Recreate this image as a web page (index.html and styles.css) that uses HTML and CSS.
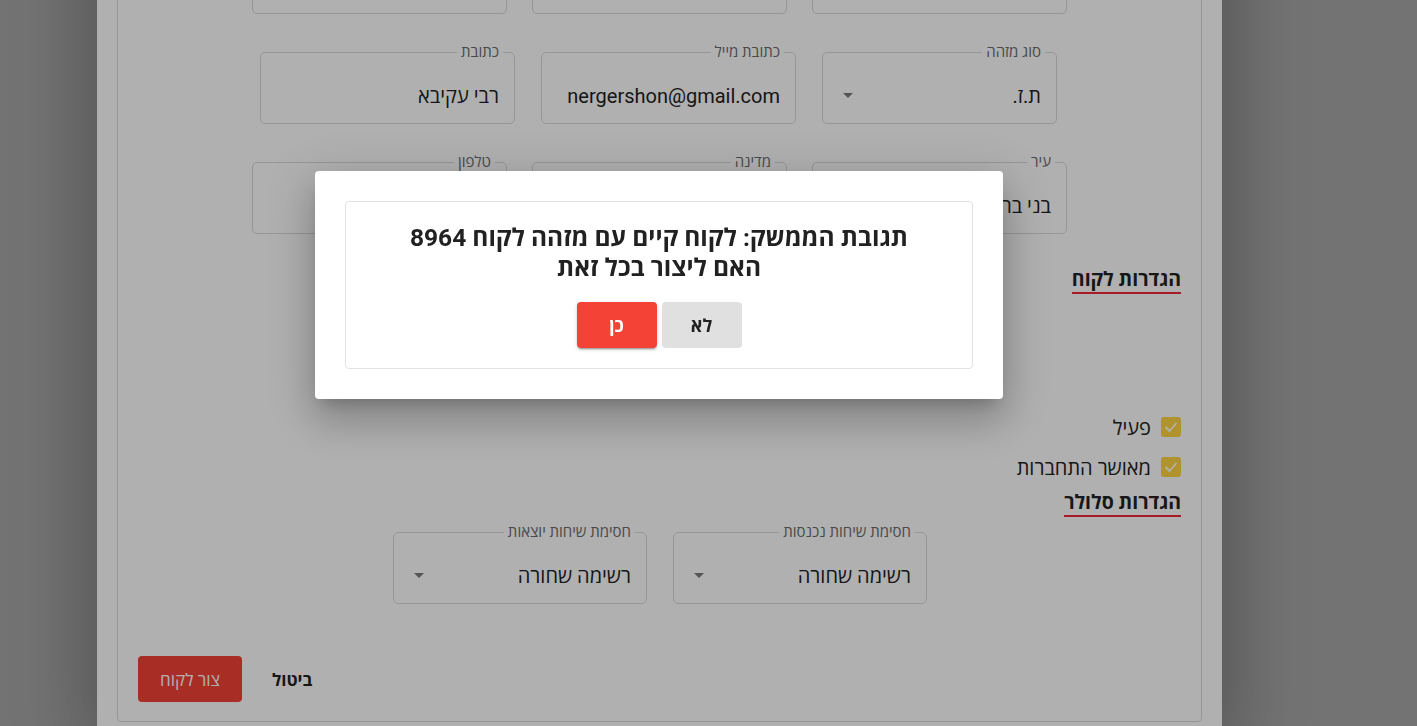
FILE: index.html
```html
<!DOCTYPE html>
<html lang="he">
<head>
<meta charset="utf-8">
<title>יצירת לקוח</title>
<link rel="stylesheet" href="styles.css">
</head>
<body>
<div class="panel">
  <div class="card">
    <div class="row row-wide">
      <fieldset class="field"><legend class="blank"></legend><div class="value">&nbsp;</div></fieldset>
      <fieldset class="field"><legend class="blank"></legend><div class="value">&nbsp;</div></fieldset>
      <fieldset class="field"><legend class="blank"></legend><div class="value">&nbsp;</div></fieldset>
    </div>
    <div class="row row-mid">
      <fieldset class="field narrow"><legend>סוג מזהה</legend><div class="value"><span>ת.ז.</span><i class="arrow"></i></div></fieldset>
      <fieldset class="field"><legend>כתובת מייל</legend><div class="value">nergershon@gmail.com</div></fieldset>
      <fieldset class="field"><legend>כתובת</legend><div class="value">רבי עקיבא</div></fieldset>
    </div>
    <div class="row row-wide row-last">
      <fieldset class="field"><legend>עיר</legend><div class="value">בני ברק</div></fieldset>
      <fieldset class="field"><legend>מדינה</legend><div class="value">ישראל</div></fieldset>
      <fieldset class="field"><legend>טלפון</legend><div class="value">0527654321</div></fieldset>
    </div>

    <h3 class="section-title first">הגדרות לקוח</h3>

    <div class="checks">
      <label class="check"><span class="box"><svg viewBox="0 0 20 20" width="20" height="20"><polyline points="5,10.5 8.5,14 15,6.5" fill="none" stroke="#fff" stroke-width="1.8" stroke-linecap="round" stroke-linejoin="round"/></svg></span>פעיל</label>
      <label class="check"><span class="box"><svg viewBox="0 0 20 20" width="20" height="20"><polyline points="5,10.5 8.5,14 15,6.5" fill="none" stroke="#fff" stroke-width="1.8" stroke-linecap="round" stroke-linejoin="round"/></svg></span>מאושר התחברות</label>
    </div>

    <h3 class="section-title">הגדרות סלולר</h3>

    <div class="row row-cell">
      <fieldset class="field"><legend>חסימת שיחות נכנסות</legend><div class="value"><span>רשימה שחורה</span><i class="arrow"></i></div></fieldset>
      <fieldset class="field"><legend>חסימת שיחות יוצאות</legend><div class="value"><span>רשימה שחורה</span><i class="arrow"></i></div></fieldset>
    </div>

    <div class="actions">
      <button class="btn-flat">ביטול</button>
      <button class="btn-primary">צור לקוח</button>
    </div>
  </div>
</div>

<div class="backdrop"></div>

<div class="dialog">
  <div class="dialog-box">
    <h2 class="dialog-title">תגובת הממשק: לקוח קיים עם מזהה לקוח 8964<br>האם ליצור בכל זאת</h2>
    <div class="dialog-actions">
      <button class="btn-no">לא</button>
      <button class="btn-yes">כן</button>
    </div>
  </div>
</div>
</body>
</html>
```

FILE: styles.css
```css
html, body {
  margin: 0;
  height: 726px;
  overflow: hidden;
}

body {
  background: #a7a7a7;
  font-family: Roboto, "Open Sans", "Noto Sans", sans-serif;
  color: #212121;
}

.panel {
  width: 1125px;
  box-sizing: border-box;
  margin: -106px 0 0 97px;
  padding: 20px;
  background: #fff;
  box-shadow: 0 0 70px 10px rgba(0, 0, 0, 0.28);
}

.card {
  direction: rtl;
  border: 1px solid #d9d9d9;
  border-radius: 4px;
  padding: 19px 0 19px;
}

.row {
  display: flex;
  gap: 25px;
  padding-right: 134px;
  margin-bottom: 30px;
}

.row-mid {
  gap: 26px;
  padding-right: 144px;
}

.row-last {
  margin-bottom: 34px;
}

.row-cell {
  gap: 26px;
  padding-right: 274px;
  margin: 7px 0 0;
}

.field {
  width: 255px;
  box-sizing: border-box;
  margin: 0;
  padding: 0 15px 15px;
  min-width: 0;
  border: 1px solid #d9d9d9;
  border-radius: 5px;
}

.row-cell .field {
  width: 254px;
}

.field.narrow {
  width: 235px;
}

.field legend {
  font-size: 15px;
  line-height: 16px;
  color: #6c6c6c;
  padding: 0 4px;
  margin-right: -4px;
}

.field legend.blank {
  height: 16px;
  padding: 0;
}

.value {
  display: flex;
  justify-content: space-between;
  align-items: flex-start;
  padding-top: 24px;
  font-size: 20px;
  line-height: 24px;
  color: #222;
  white-space: nowrap;
}

.arrow {
  display: block;
  width: 0;
  height: 0;
  margin: 9px 0 0 5px;
  border-left: 5px solid transparent;
  border-right: 5px solid transparent;
  border-top: 5px solid #7a7a7a;
}

.section-title {
  width: fit-content;
  margin: 0 20px 0 0;
  font-size: 19.5px;
  line-height: 24px;
  font-weight: 700;
  color: #222;
  border-bottom: 2px solid #f2283a;
}

.checks {
  margin: 113px 20px 4px 0;
}

.check {
  display: flex;
  align-items: center;
  gap: 10px;
  height: 40px;
  font-size: 20px;
  color: #222;
}

.box {
  width: 20px;
  height: 20px;
  border-radius: 3px;
  background: #ffd642;
  display: block;
}

.box svg {
  display: block;
}

.actions {
  display: flex;
  justify-content: flex-end;
  gap: 10px;
  padding-left: 20px;
  margin-top: 52px;
}

.actions button {
  height: 46px;
  border: 0;
  border-radius: 4px;
  font-family: inherit;
  font-size: 17px;
  cursor: pointer;
}

.btn-flat {
  background: transparent;
  padding: 0 20px;
  font-weight: 700;
  color: #222;
}

.btn-primary {
  width: 104px;
  background: #f44336;
  color: #fff;
  font-weight: 500;
}

.backdrop {
  position: fixed;
  inset: 0;
  background: rgba(0, 0, 0, 0.31);
}

.dialog {
  position: absolute;
  left: 315px;
  top: 171px;
  width: 688px;
  box-sizing: border-box;
  padding: 30px;
  background: #fff;
  border-radius: 4px;
  direction: rtl;
  box-shadow: 0 11px 15px -7px rgba(0, 0, 0, 0.2), 0 24px 38px 3px rgba(0, 0, 0, 0.14), 0 9px 46px 8px rgba(0, 0, 0, 0.12);
}

.dialog-box {
  border: 1px solid #e2e2e2;
  border-radius: 4px;
  padding: 21px 0 20px;
  text-align: center;
}

.dialog-title {
  margin: 0;
  font-size: 24.5px;
  line-height: 30px;
  font-weight: 700;
  color: #212121;
}

.dialog-actions {
  display: flex;
  justify-content: center;
  gap: 5px;
  margin-top: 19px;
}

.dialog-actions button {
  width: 80px;
  height: 46px;
  border: 0;
  border-radius: 4px;
  font-family: inherit;
  font-size: 18px;
  font-weight: 700;
  cursor: pointer;
}

.btn-no {
  background: #e0e0e0;
  color: #212121;
}

.btn-yes {
  background: #f44336;
  color: #fff;
  box-shadow: 0 3px 1px -2px rgba(0, 0, 0, 0.2), 0 2px 2px 0 rgba(0, 0, 0, 0.14), 0 1px 5px 0 rgba(0, 0, 0, 0.12);
}
```
